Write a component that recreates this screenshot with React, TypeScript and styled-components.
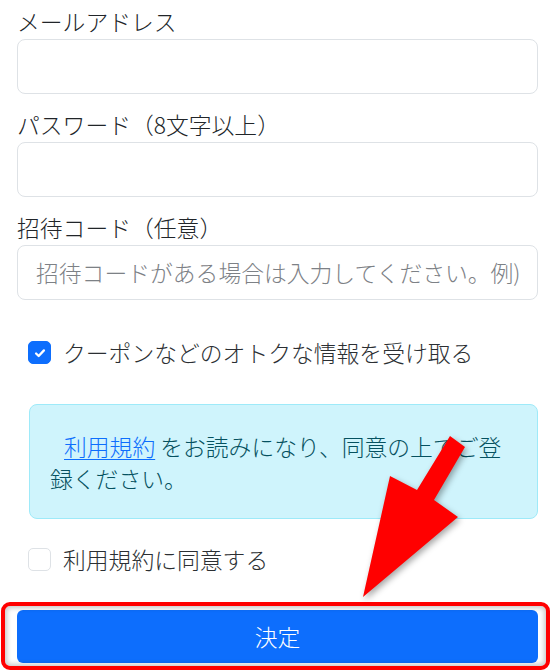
import React from "react";
import styled, { createGlobalStyle } from "styled-components";

const GlobalStyle = createGlobalStyle`
  html, body {
    margin: 0;
    padding: 0;
    background: #fff;
  }
  body {
    font-family: "Noto Sans CJK JP", "Noto Sans", sans-serif;
    font-size: 22.8px;
    font-weight: 300;
    color: #212529;
  }
  * { box-sizing: border-box; }
`;

export default function App() {
  return (
    <>
      <GlobalStyle />
      <Page>
        <Group>
          <Label>メールアドレス</Label>
          <Input type="email" />
        </Group>
        <Group>
          <Label>パスワード（8文字以上）</Label>
          <Input type="password" />
        </Group>
        <Group>
          <Label>招待コード（任意）</Label>
          <Input type="text" placeholder="招待コードがある場合は入力してください。例)" />
        </Group>

        <CheckRow $top={36}>
          <CheckBox $checked>
            <svg width="14" height="14" viewBox="0 0 16 16">
              <path d="M3.5 8.5l3 3 6-6.5" fill="none" stroke="#fff" strokeWidth="2.6" strokeLinecap="round" strokeLinejoin="round" />
            </svg>
          </CheckBox>
          <CheckText>クーポンなどのオトクな情報を受け取る</CheckText>
        </CheckRow>

        <Alert>
          <p><TermsLink href="#">利用規約</TermsLink> をお読みになり、同意の上でご登録ください。</p>
        </Alert>

        <CheckRow $top={24}>
          <CheckBox />
          <CheckText>利用規約に同意する</CheckText>
        </CheckRow>

        <SubmitWrap>
          <SubmitButton type="button">決定</SubmitButton>
          <Highlight />
        </SubmitWrap>

        <Arrow viewBox="0 0 553 672" width="553" height="672">
          <polygon points="450,436 465,447 434,500 458,517 363,597 390,476 417,490" fill="#ff0000" />
        </Arrow>
      </Page>
    </>
  );
}

const Page = styled.div`
  position: relative;
  width: 553px;
  height: 672px;
  overflow: hidden;
  padding: 5px 15px 0 17px;
`;

const Group = styled.div`
  margin-bottom: 14px;
`;

const Label = styled.label`
  display: block;
  font-size: 22.8px;
  line-height: 33px;
  margin-bottom: 1px;
  color: #212529;
`;

const Input = styled.input`
  display: block;
  width: 100%;
  height: 55px;
  padding: 0 18px;
  border: 1px solid #dee2e6;
  border-radius: 8px;
  font-family: inherit;
  font-size: 22.8px;
  font-weight: 300;
  color: #212529;
  background: #fff;
  outline: none;
  &::placeholder {
    color: #7d8186;
  }
`;

const CheckRow = styled.div<{ $top: number }>`
  display: flex;
  align-items: center;
  gap: 12px;
  margin-top: ${p => p.$top}px;
  padding-left: 11px;
  height: 33px;
`;

const CheckBox = styled.span<{ $checked?: boolean }>`
  width: 23px;
  height: 23px;
  flex: none;
  display: flex;
  align-items: center;
  justify-content: center;
  border-radius: 5px;
  border: 1px solid ${p => (p.$checked ? "#0d6efd" : "#dee2e6")};
  background: ${p => (p.$checked ? "#0d6efd" : "#fff")};
`;

const CheckText = styled.span`
  font-size: 22.8px;
  line-height: 33px;
  color: #2b2f33;
`;

const Alert = styled.div`
  margin: 35px 0 0 12px;
  padding: 26px 28px 23px 20px;
  border: 1px solid #9eeaf9;
  border-radius: 8px;
  background: #cff4fc;
  color: #055160;
  p {
    margin: 0;
    font-size: 22.8px;
    line-height: 32px;
    text-indent: 14px;
  }
`;

const TermsLink = styled.a`
  color: #0d6efd;
  text-decoration: underline;
  text-decoration-thickness: 1px;
  text-underline-offset: 3px;
`;

const SubmitWrap = styled.div`
  position: relative;
  margin-top: 34px;
`;

const SubmitButton = styled.button`
  display: block;
  width: 100%;
  height: 53px;
  border: none;
  border-radius: 6px;
  background: #0d6efd;
  color: #fff;
  font-family: inherit;
  font-size: 22.8px;
  font-weight: 300;
  cursor: pointer;
`;

const Highlight = styled.div`
  position: absolute;
  left: -16px;
  right: -12px;
  top: -8px;
  bottom: -7px;
  border: 4px solid #ff0000;
  border-radius: 9px;
  box-shadow: inset 0 0 5px 2px rgba(0, 0, 0, 0.22);
  pointer-events: none;
`;

const Arrow = styled.svg`
  position: absolute;
  top: 0;
  left: 0;
  pointer-events: none;
  filter: drop-shadow(2px 3px 3px rgba(0, 0, 0, 0.35));
`;
